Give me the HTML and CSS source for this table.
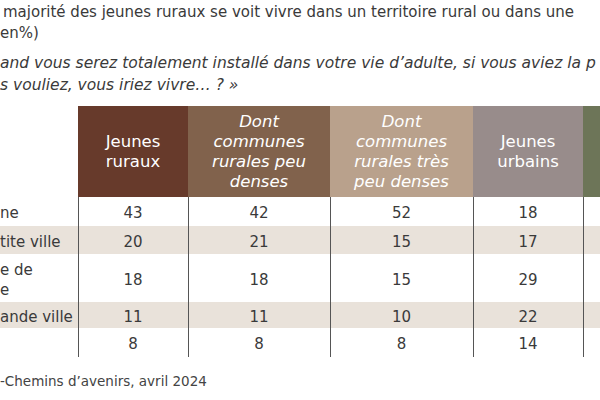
FILE: index.html
```html
<!DOCTYPE html>
<html lang="fr">
<head>
<meta charset="utf-8">
<link rel="stylesheet" href="styles.css">
</head>
<body>
<div class="page">
  <div class="title">
    <p class="lead">majorité des jeunes ruraux se voit vivre dans un territoire rural ou dans une<br>en%)</p>
    <p class="question">and vous serez totalement installé dans votre vie d’adulte, si vous aviez la p<br>s vouliez, vous iriez vivre… ? »</p>
  </div>
  <table class="data">
    <colgroup>
      <col class="c-label"><col class="c-a"><col class="c-b"><col class="c-c"><col class="c-d"><col class="c-e">
    </colgroup>
    <thead>
      <tr>
        <th class="blank"></th>
        <th class="h h1">Jeunes<br>ruraux</th>
        <th class="h h2 it">Dont<br>communes<br>rurales peu<br>denses</th>
        <th class="h h3 it">Dont<br>communes<br>rurales très<br>peu denses</th>
        <th class="h h4">Jeunes<br>urbains</th>
        <th class="h h5"></th>
      </tr>
    </thead>
    <tbody>
      <tr class="r29"><td class="lab">ne</td><td>43</td><td>42</td><td>52</td><td>18</td><td></td></tr>
      <tr class="sh"><td class="lab">tite ville</td><td>20</td><td>21</td><td>15</td><td>17</td><td></td></tr>
      <tr class="tall"><td class="lab">e de<br>e</td><td>18</td><td>18</td><td>15</td><td>29</td><td></td></tr>
      <tr class="sh r26"><td class="lab">ande ville</td><td>11</td><td>11</td><td>10</td><td>22</td><td></td></tr>
      <tr class="r29"><td class="lab"></td><td>8</td><td>8</td><td>8</td><td>14</td><td></td></tr>
    </tbody>
  </table>
  <p class="source">-Chemins d’avenirs, avril 2024</p>
</div>
</body>
</html>
```
FILE: styles.css
```css
html, body {
  margin: 0;
  padding: 0;
  background: #fff;
}
.page {
  width: 600px;
  height: 400px;
  overflow: hidden;
  font-family: "DejaVu Sans", "Open Sans", sans-serif;
  color: #3a3a3a;
}
.title p {
  margin: 0;
  white-space: nowrap;
}
.lead {
  font-size: 15px;
  padding: 2px 0 0 0;
  text-indent: 3px;
  line-height: 21px;
}
.question {
  font-size: 15.5px;
  font-style: italic;
  padding: 8px 0 0 0;
  line-height: 22px;
}
.data {
  margin-top: 10px;
  border-collapse: collapse;
  table-layout: fixed;
  width: 640px;
}
.c-label { width: 78px; }
.c-a { width: 110px; }
.c-b { width: 142px; }
.c-c { width: 143px; }
.c-d { width: 110px; }
.c-e { width: 57px; }
.data th {
  height: 91px;
  padding: 0;
  font-weight: normal;
  font-size: 16.5px;
  line-height: 20px;
  color: #fff;
  text-align: center;
  vertical-align: middle;
}
.data th.blank { background: #fff; }
.h1 { background: #673a2b; }
.h2 { background: #81624c; }
.h3 { background: #b9a18c; }
.h4 { background: #988c8b; }
.h5 { background: #6d7558; }
.it { font-style: italic; }
.data td {
  height: 25px;
  padding: 3px 0 0 0;
  font-size: 15px;
  line-height: 20px;
  text-align: center;
  vertical-align: middle;
  border-left: 1px solid #555;
}
.data td.lab {
  border-left: none;
  text-align: left;
}
.data tr.r29 td { height: 26px; }
.data tr.r26 td { height: 23px; }
.data tr.sh td { background: #e9e2da; }
.data tr.tall td { height: 45px; }
.source {
  margin: 16px 0 0 0;
  font-size: 13.5px;
  color: #444;
}
```
